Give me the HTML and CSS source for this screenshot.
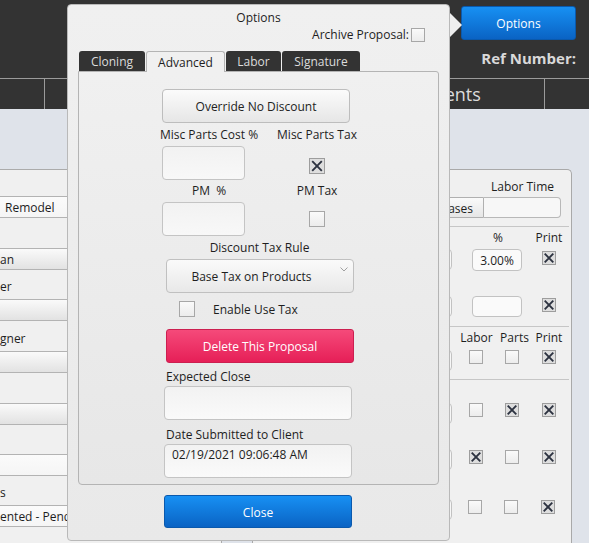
FILE: index.html
```html
<!DOCTYPE html>
<html>
<head>
<meta charset="utf-8">
<title>Options</title>
<link rel="stylesheet" href="styles.css">
</head>
<body>
<header class="topbar">
  <div class="top-right">
    <button class="btn-blue options-btn">Options</button>
    <div class="ref">Ref Number:</div>
  </div>
</header>
<nav class="nav">
  <div class="nav-cell c1"></div>
  <div class="nav-cell c2">Proposal</div>
  <div class="nav-cell c3">Attachments</div>
  <div class="nav-cell c4"></div>
</nav>
<main class="content">
  <section class="left-panel">
    <div class="lrow h26"></div>
    <div class="lbox white pad5">Remodel</div>
    <div class="lrow h30"></div>
    <div class="lbox sel">an</div>
    <div class="lrow h29">er</div>
    <div class="lbox sel"></div>
    <div class="lrow h30">gner</div>
    <div class="lbox sel"></div>
    <div class="lrow h30"></div>
    <div class="lbox sel"></div>
    <div class="lrow h29"></div>
    <div class="lbox white"></div>
    <div class="lrow h29">s</div>
    <div class="lbox white">ented - Pending</div>
  </section>

  <section class="right-panel">
    <div class="lt-grid lt-head"><span class="lt-label">Labor Time</span></div>
    <div class="lt-grid lt-row">
      <button class="phases">Phases</button>
      <div class="lt-input"></div>
    </div>
    <div class="sep"></div>
    <div class="dgrid hdr">
      <span class="pct-label">%</span>
      <span class="col-print">Print</span>
    </div>
    <div class="dgrid drow r1">
      <div class="part-input"></div>
      <div class="pct-input">3.00%</div>
      <span class="cb on col-print top2"><svg viewBox="0 0 12 12"><path d="M1.7 1.7 L10.3 10.3 M10.3 1.7 L1.7 10.3"/></svg></span>
    </div>
    <div class="dgrid drow r2">
      <div class="part-input"></div>
      <div class="pct-input"></div>
      <span class="cb on col-print top2"><svg viewBox="0 0 12 12"><path d="M1.7 1.7 L10.3 10.3 M10.3 1.7 L1.7 10.3"/></svg></span>
    </div>
    <div class="sep s2"></div>
    <div class="dgrid hdr">
      <span class="col-labor">Labor</span>
      <span class="col-parts">Parts</span>
      <span class="col-print">Print</span>
    </div>
    <div class="dgrid drow r3">
      <div class="part-input"></div>
      <span class="cb col-labor"></span>
      <span class="cb col-parts"></span>
      <span class="cb on col-print"><svg viewBox="0 0 12 12"><path d="M1.7 1.7 L10.3 10.3 M10.3 1.7 L1.7 10.3"/></svg></span>
    </div>
    <div class="sep s3"></div>
    <div class="dgrid drow r4">
      <div class="part-input"></div>
      <span class="cb col-labor"></span>
      <span class="cb on col-parts"><svg viewBox="0 0 12 12"><path d="M1.7 1.7 L10.3 10.3 M10.3 1.7 L1.7 10.3"/></svg></span>
      <span class="cb on col-print"><svg viewBox="0 0 12 12"><path d="M1.7 1.7 L10.3 10.3 M10.3 1.7 L1.7 10.3"/></svg></span>
    </div>
    <div class="dgrid drow r5">
      <div class="part-input"></div>
      <span class="cb on col-labor top1"><svg viewBox="0 0 12 12"><path d="M1.7 1.7 L10.3 10.3 M10.3 1.7 L1.7 10.3"/></svg></span>
      <span class="cb col-parts top1"></span>
      <span class="cb on col-print top1"><svg viewBox="0 0 12 12"><path d="M1.7 1.7 L10.3 10.3 M10.3 1.7 L1.7 10.3"/></svg></span>
    </div>
    <div class="dgrid drow r6">
      <div class="part-input"></div>
      <span class="cb col-labor top1 left1"></span>
      <span class="cb col-parts top1 left1"></span>
      <span class="cb on col-print top1 left1"><svg viewBox="0 0 12 12"><path d="M1.7 1.7 L10.3 10.3 M10.3 1.7 L1.7 10.3"/></svg></span>
    </div>
  </section>
</main>

<div class="popup">
  <div class="popup-title">Options</div>
  <div class="archive">
    <span>Archive Proposal:</span>
    <span class="cb"></span>
  </div>
  <div class="tabs">
    <div class="tab t-clone">Cloning</div>
    <div class="tab active t-adv">Advanced</div>
    <div class="tab t-labor">Labor</div>
    <div class="tab t-sig">Signature</div>
  </div>
  <div class="panel">
    <button class="override">Override No Discount</button>
    <div class="pair labels p1">
      <span>Misc Parts Cost %</span>
      <span>Misc Parts Tax</span>
    </div>
    <div class="pair inputs">
      <div class="num-input"></div>
      <span class="cb lg on cb-a"><svg viewBox="0 0 14 14"><path d="M2.2 2.2 L11.8 11.8 M11.8 2.2 L2.2 11.8"/></svg></span>
    </div>
    <div class="pair labels">
      <span>PM&nbsp;&nbsp;%</span>
      <span>PM Tax</span>
    </div>
    <div class="pair inputs">
      <div class="num-input"></div>
      <span class="cb lg cb-b"></span>
    </div>
    <div class="center-label">Discount Tax Rule</div>
    <div class="select">
      <span class="select-text">Base Tax on Products</span>
      <svg class="chev" viewBox="0 0 8 5"><path d="M0.5 0.5 L4 4 L7.5 0.5"/></svg>
    </div>
    <div class="enable">
      <span class="cb lg"></span>
      <span>Enable Use Tax</span>
    </div>
    <button class="delete">Delete This Proposal</button>
    <div class="field-label">Expected Close</div>
    <div class="field-input"></div>
    <div class="field-label f2">Date Submitted to Client</div>
    <div class="field-input date">02/19/2021 09:06:48 AM</div>
  </div>
  <button class="btn-blue close-btn">Close</button>
</div>
</body>
</html>
```

FILE: styles.css
```css
* { box-sizing: border-box; margin: 0; padding: 0; }

body {
  margin: 0;
  width: 589px;
  height: 543px;
  overflow: hidden;
  position: relative;
  font-family: "Open Sans", "Noto Sans", sans-serif;
  font-size: 12px;
  color: #1e1e1e;
  background: #dfe3ea;
}

button { font: inherit; color: inherit; cursor: default; }

/* ---------- header ---------- */
.topbar {
  height: 78px;
  background: #333333;
  display: flex;
  justify-content: flex-end;
  padding: 6px 13px 0 0;
}
.top-right { display: flex; flex-direction: column; align-items: flex-end; }
.btn-blue {
  background: linear-gradient(#1790f3, #0a63c4);
  border: 1px solid #0a59ad;
  border-radius: 3px;
  color: #ffffff;
  display: flex;
  align-items: center;
  justify-content: center;
}
.options-btn { width: 115px; height: 34px; padding-top: 1px; }
.ref {
  margin-top: 8px;
  font-weight: 700;
  font-size: 15px;
  line-height: 20px;
  color: #d9d9d9;
}

.nav {
  display: flex;
  height: 31px;
  background: #333333;
  border-top: 1px solid #9b9b9b;
}
.nav-cell {
  border-right: 1px solid #9b9b9b;
  color: #dcdcdc;
  font-size: 18px;
  line-height: 30px;
  text-align: center;
}
.c1 { width: 45px; }
.c2 { width: 266px; }
.c3 { width: 234px; }
.c4 { flex: 1; border-right: 0; }

/* ---------- content ---------- */
.content {
  display: flex;
  align-items: flex-start;
  padding-top: 60px;
  height: 434px;
}

.left-panel {
  width: 222px;
  height: 380px;
  background: #f0f0f0;
  border-top: 1px solid #ababab;
  border-right: 1px solid #ababab;
  display: flex;
  flex-direction: column;
  overflow: hidden;
}
.lrow {
  display: flex;
  align-items: flex-end;
  padding-bottom: 4px;
  line-height: 16px;
  white-space: nowrap;
}
.h26 { height: 26px; }
.h29 { height: 29px; }
.h30 { height: 30px; }
.lbox {
  height: 22px;
  border-top: 1px solid #b3b3b3;
  border-bottom: 1px solid #b3b3b3;
  display: flex;
  align-items: center;
  padding-top: 1px;
  line-height: 16px;
  white-space: nowrap;
}
.lbox.white { background: linear-gradient(#fbfbfb, #f5f5f5); }
.lbox.sel { background: linear-gradient(#fafafa, #e2e2e2); }
.pad5 { padding-left: 5px; }

.right-panel {
  margin-left: 30px;
  width: 320px;
  height: 380px;
  background: #f0f0f0;
  border: 1px solid #a9a9a9;
  border-bottom: 0;
  border-radius: 5px 5px 0 0;
  display: flex;
  flex-direction: column;
}
.lt-grid {
  display: grid;
  grid-template-columns: 1fr 77px;
  padding-right: 10px;
}
.lt-head { margin-top: 9px; line-height: 16px; }
.lt-label { grid-column: 2; text-align: center; }
.lt-row { margin-top: 2px; height: 21px; }
.phases {
  justify-self: end;
  height: 21px;
  padding: 1px 10px 0;
  border: 1px solid #b0b0b0;
  border-radius: 3px 0 0 3px;
  background: linear-gradient(#fafafa, #e6e6e6);
}
.lt-input {
  height: 21px;
  border: 1px solid #b8b8b8;
  border-left: 0;
  border-radius: 0 4px 4px 0;
  background: #f7f7f7;
}
.sep {
  margin-top: 8px;
  margin-right: 2px;
  border-top: 1px solid #c6c6c6;
}
.s2 { margin-top: 9px; }
.s3 { margin-top: 8px; }

.dgrid {
  display: grid;
  grid-template-columns: 1fr 6px 36px 36px 38px;
  padding-right: 3px;
}
.hdr { margin-top: 3px; line-height: 16px; }
.pct-label { grid-column: 3 / 5; text-align: center; padding-left: 8px; }
.col-labor { grid-column: 3; justify-self: center; }
.col-parts { grid-column: 4; justify-self: center; }
.col-print { grid-column: 5; justify-self: center; }
.hdr .col-parts { margin-left: 5px; }
.hdr .col-labor { margin-left: 1px; }
.drow { align-items: start; }
.r1 { margin-top: 3px; height: 22px; }
.r2 { margin-top: 25px; height: 21px; }
.r3 { margin-top: 4px; height: 21px; }
.r4 { margin-top: 23px; height: 21px; }
.r5 { margin-top: 25px; height: 21px; }
.r6 { margin-top: 29px; height: 21px; }
.part-input {
  grid-column: 1;
  grid-row: 1;
  justify-self: end;
  width: 100px;
  height: 21px;
  border: 1px solid #c2c2c2;
  border-radius: 4px;
  background: #f7f7f7;
}
.pct-input {
  grid-column: 3 / 5;
  grid-row: 1;
  justify-self: start;
  margin-left: 14px;
  width: 50px;
  height: 22px;
  border: 1px solid #c2c2c2;
  border-radius: 4px;
  background: #fafafa;
  display: flex;
  align-items: center;
  justify-content: center;
  padding-top: 1px;
  line-height: 16px;
}
.r2 .pct-input { height: 21px; }
.drow .cb { grid-row: 1; }
.top1 { margin-top: 1px; }
.top2 { margin-top: 2px; }
.left1 { position: relative; left: -1px; }

/* ---------- checkbox ---------- */
.cb {
  width: 14px;
  height: 14px;
  border: 1px solid #a7a7a7;
  background: linear-gradient(#fafafa, #ececec);
  display: inline-flex;
  flex: none;
}
.cb.lg { width: 16px; height: 16px; }
.cb.on { background: #dedede; border-color: #9d9d9d; }
.cb svg { width: 100%; height: 100%; display: block; }
.cb path { stroke: #2c3240; stroke-width: 1.9; fill: none; }

/* ---------- popup ---------- */
.popup {
  position: absolute;
  left: 67px;
  top: 4px;
  width: 383px;
  height: 537px;
  background: linear-gradient(#f0f0f0, #e9e9e9);
  border: 1px solid #b9b9b9;
  border-radius: 4px;
  display: flex;
  flex-direction: column;
  z-index: 5;
}
.popup::after {
  content: "";
  position: absolute;
  right: -13px;
  top: 8px;
  border-left: 12px solid #efefef;
  border-top: 12px solid transparent;
  border-bottom: 12px solid transparent;
}
.popup-title { margin-top: 5px; line-height: 16px; text-align: center; }
.archive {
  margin-top: 0;
  display: flex;
  justify-content: flex-end;
  align-items: flex-start;
  gap: 2px;
  padding-right: 24px;
  line-height: 16px;
}
.archive span:first-child { padding-top: 1px; }
.archive .cb { margin-top: 2px; }

.tabs {
  margin-top: 8px;
  margin-left: 11px;
  display: flex;
  gap: 1px;
  height: 20px;
}
.tab {
  height: 20px;
  background: #333333;
  color: #dcdcdc;
  border-radius: 3px 3px 0 0;
  display: flex;
  align-items: center;
  justify-content: center;
  padding-top: 1px;
}
.tab.active {
  height: 21px;
  background: #f0f0f0;
  color: #1e1e1e;
  border: 1px solid #b4b4b4;
  border-bottom: 0;
  padding-top: 0;
  position: relative;
  z-index: 2;
}
.t-clone { width: 66px; }
.t-adv { width: 79px; }
.t-labor { width: 55px; }
.t-sig { width: 78px; }

.panel {
  margin-left: 10px;
  width: 361px;
  border: 1px solid #b4b4b4;
  border-radius: 0 3px 4px 4px;
  background: linear-gradient(#f0f0f0, #e7e7e7);
  padding-bottom: 6px;
  display: flex;
  flex-direction: column;
  position: relative;
  z-index: 1;
}
.override {
  margin: 17px 0 0 83px;
  width: 188px;
  height: 34px;
  border: 1px solid #bdbdbd;
  border-radius: 4px;
  background: linear-gradient(#fbfbfb, #e6e6e6);
  color: #222222;
}
.pair {
  display: grid;
  grid-template-columns: 118px 98px;
  margin-left: 71px;
}
.pair.labels { margin-top: 2px; line-height: 16px; text-align: center; padding-top: 1px; }
.pair.labels.p1 { margin-top: 3px; }
.pair.inputs { margin-top: 3px; align-items: start; }
.num-input {
  margin-left: 12px;
  width: 83px;
  height: 34px;
  border: 1px solid #c4c4c4;
  border-radius: 4px;
  background: linear-gradient(#f2f2f2, #f8f8f8);
}
.pair .cb { justify-self: center; }
.cb-a { margin-top: 12px; }
.cb-b { margin-top: 9px; }
.center-label { margin-top: 3px; line-height: 16px; text-align: center; padding: 1px 0 0 2px; }
.select {
  margin: 3px 0 0 87px;
  width: 188px;
  height: 34px;
  border: 1px solid #c0c0c0;
  border-radius: 4px;
  background: linear-gradient(#fafafa, #e8e8e8);
  display: flex;
}
.select-text { flex: 1; align-self: center; text-align: center; line-height: 16px; padding-top: 1px; }
.chev { width: 8px; height: 5px; margin: 7px 5px 0 4px; flex: none; }
.chev path { stroke: #a0a0a0; stroke-width: 1; fill: none; }
.enable {
  margin: 8px 0 0 100px;
  display: flex;
  align-items: center;
  gap: 18px;
  height: 16px;
  line-height: 16px;
}
.enable span:last-child { padding-top: 1px; }
.delete {
  margin: 12px 0 0 87px;
  width: 188px;
  height: 34px;
  border: 1px solid #cc1f50;
  border-radius: 3px;
  background: linear-gradient(#f54a7a, #e61f57);
  color: #ffffff;
  padding-top: 1px;
}
.field-label { margin: 5px 0 0 87px; line-height: 16px; padding-top: 1px; }
.field-label.f2 { margin-top: 6px; }
.field-input {
  margin: 1px 0 0 85px;
  width: 188px;
  height: 34px;
  border: 1px solid #c4c4c4;
  border-radius: 4px;
  background: linear-gradient(#f2f2f2, #fafafa);
}
.field-input.date { padding: 2px 7px 0; line-height: 16px; color: #1e1e1e; }
.close-btn {
  margin: 10px 0 0 96px;
  width: 188px;
  height: 33px;
  padding-top: 1px;
}
```
